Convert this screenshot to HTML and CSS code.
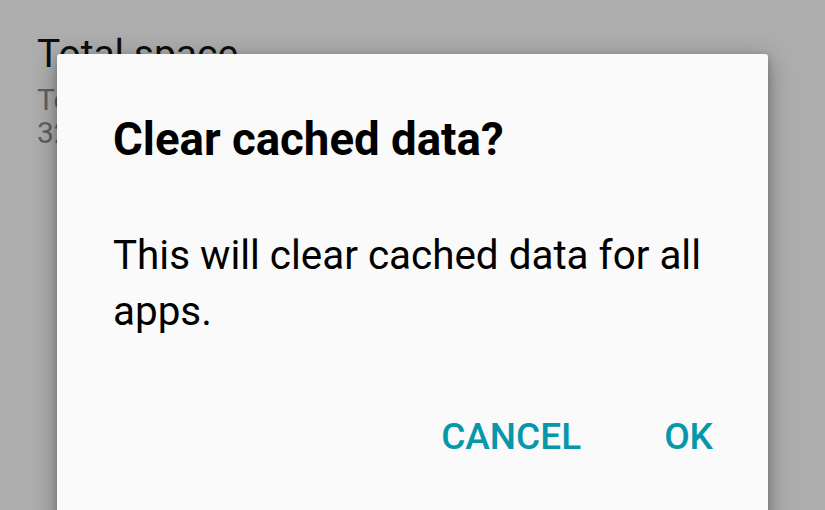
FILE: index.html
```html
<!DOCTYPE html>
<html>
<head>
<meta charset="utf-8">
<link rel="stylesheet" href="styles.css">
</head>
<body>
<div class="screen">
  <div class="settings">
    <div class="item-title">Total space</div>
    <div class="item-sub">Total space</div>
    <div class="item-sub">32 GB</div>
  </div>
  <div class="dialog">
    <h1 class="dialog-title">Clear cached data?</h1>
    <p class="dialog-message">This will clear cached data for all apps.</p>
    <div class="dialog-actions">
      <button class="action">CANCEL</button>
      <button class="action">OK</button>
    </div>
  </div>
</div>
</body>
</html>
```
FILE: styles.css
```css
html, body {
  margin: 0;
  padding: 0;
  width: 825px;
  height: 510px;
  overflow: hidden;
  background: #adadad;
  font-family: Roboto, "Noto Sans", sans-serif;
}
.screen {
  position: relative;
  width: 825px;
  height: 510px;
  overflow: hidden;
}
.settings {
  padding: 31px 0 0 37px;
}
.item-title {
  font-size: 39px;
  line-height: 46px;
  color: #0d0d0d;
}
.item-sub {
  font-size: 30px;
  line-height: 33px;
  color: #5f5f5f;
}
.item-title + .item-sub {
  margin-top: 6px;
}
.dialog {
  position: absolute;
  left: 57px;
  top: 54px;
  width: 711px;
  height: 520px;
  background: #fafafa;
  border-radius: 3px;
  box-shadow: 0 6px 24px rgba(0,0,0,0.35), 0 2px 6px rgba(0,0,0,0.2);
  box-sizing: border-box;
  padding: 0 55px 0 56px;
}
.dialog-title {
  margin: 60px 0 0;
  font-size: 45.6px;
  font-weight: 700;
  line-height: 52px;
  color: #000;
}
.dialog-message {
  margin: 62px 0 0;
  font-size: 40.4px;
  line-height: 56px;
  color: #000;
}
.dialog-actions {
  display: flex;
  justify-content: flex-end;
  gap: 83px;
  margin-top: 75px;
}
.action {
  font-family: Roboto, "Noto Sans", sans-serif;
  font-size: 37px;
  font-weight: 500;
  color: #0797ab;
  background: none;
  border: 0;
  padding: 0;
}
```
